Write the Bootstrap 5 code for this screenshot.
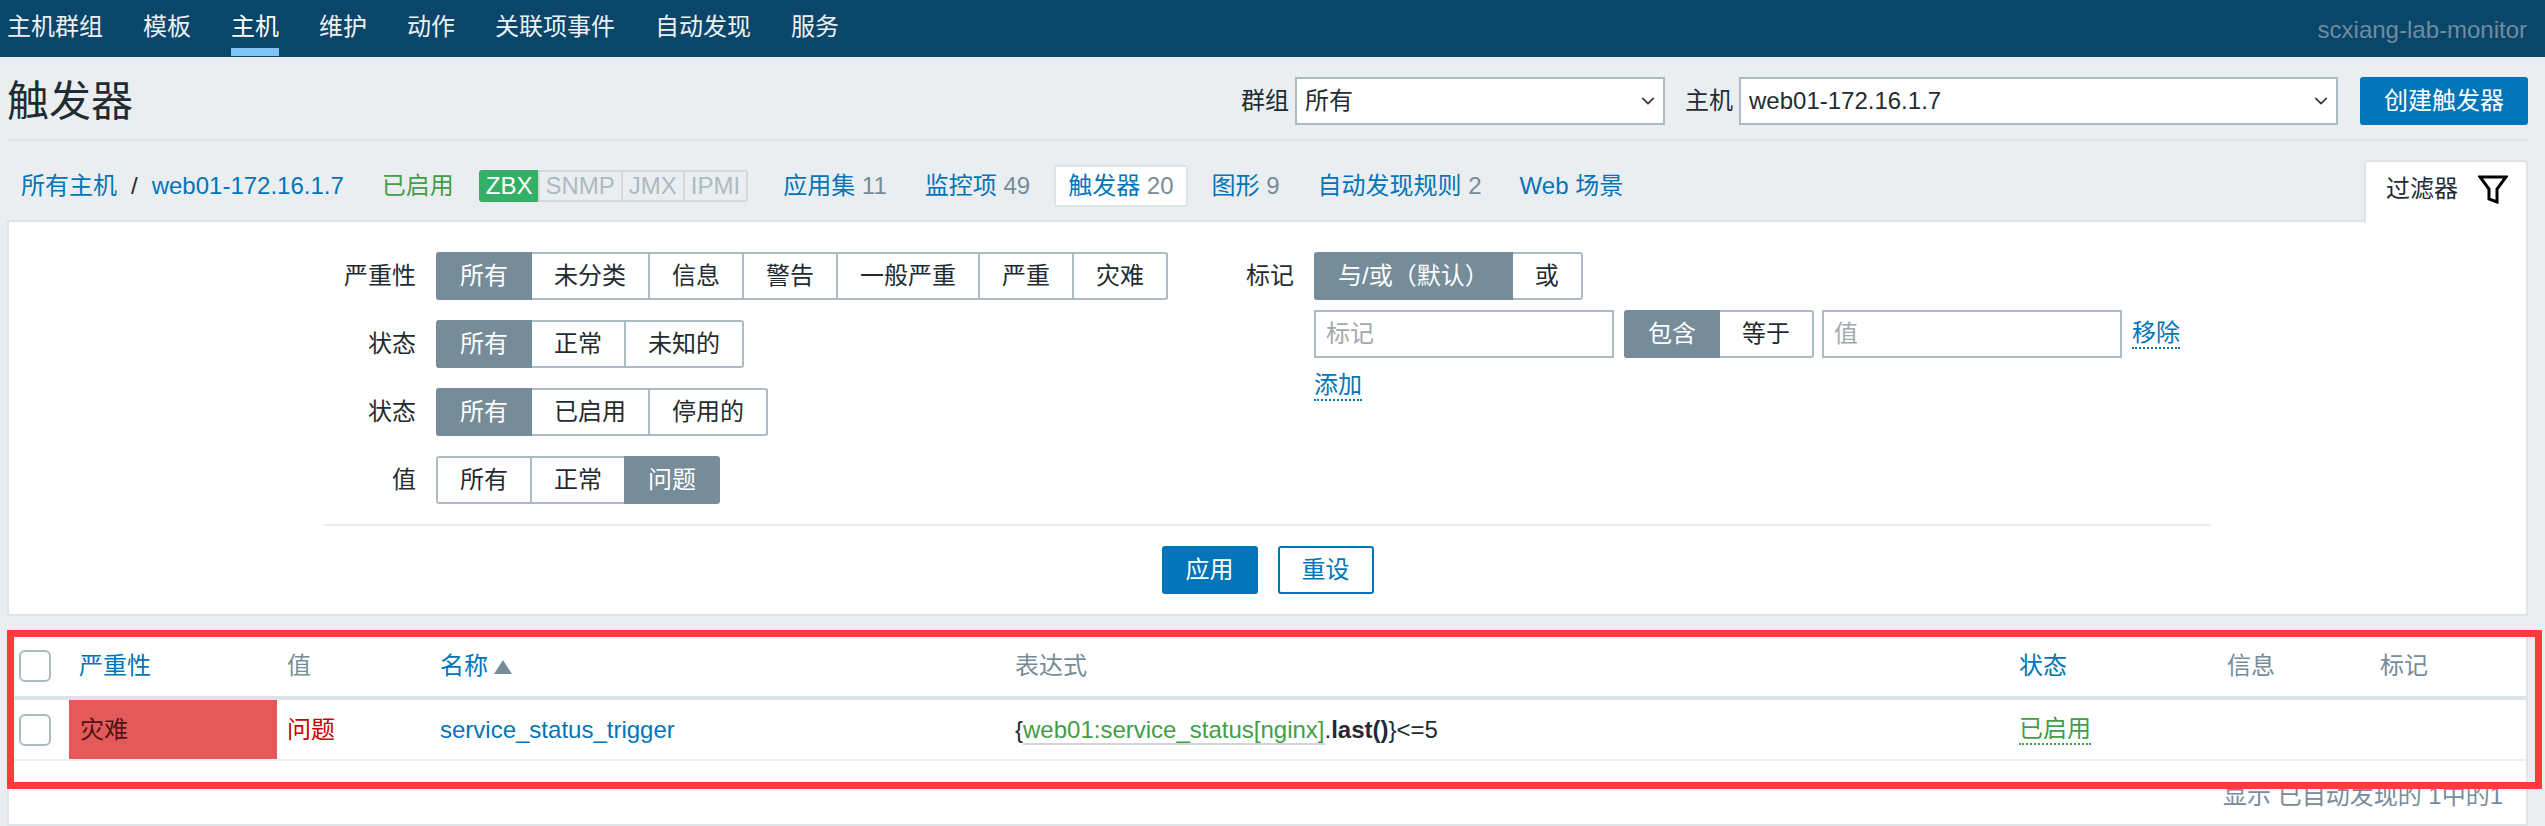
<!DOCTYPE html>
<html lang="zh-CN">
<head>
<meta charset="utf-8">
<title>触发器</title>
<link rel="stylesheet" href="https://cdn.jsdelivr.net/npm/bootstrap@5.3.0/dist/css/bootstrap.min.css">
<style>
html,body{height:826px;overflow:hidden}
body{background:#ebeef0;color:#1f2c33;font:24px/28px "Liberation Sans","Noto Sans CJK SC",sans-serif}
a{color:#0275b8;text-decoration:none}
.top-bar{height:57px;background:#0a466a;padding:0 18px 0 7px}
.top-menu{gap:40px}
.top-menu a{display:block;color:#eef1f3;padding-top:13px;height:56px;border-bottom:8px solid transparent;line-height:28px}
.top-menu a.current{color:#fff;border-bottom-color:#82c5f5}
.top-host{color:#6f8c9e;padding-top:16px}
.head-row{margin:0 17px 0 7px;padding:20px 0 14px;height:84px;border-bottom:2px solid #dfe4e7}
.head-title{font-size:42px;line-height:48px;font-weight:400;margin:0;padding-top:2px;color:#1f2c33}
.head-label{margin-right:6px}
.pick{height:48px;border:2px solid #acbbc2;border-radius:0;font-size:24px;line-height:28px;color:#1f2c33;padding:0 40px 0 8px;background-size:18px 14px;background-position:right 6px center}
.pick-a{width:370px;margin-right:20px}
.pick-b{width:599px;margin-right:22px}
.main-btn{--bs-btn-bg:#0275b8;--bs-btn-border-color:#0275b8;--bs-btn-color:#fff;--bs-btn-hover-bg:#0275b8;--bs-btn-hover-border-color:#0275b8;--bs-btn-hover-color:#fff;--bs-btn-font-size:24px;--bs-btn-line-height:44px;--bs-btn-padding-y:0;--bs-btn-padding-x:22px;--bs-btn-border-width:2px;--bs-btn-border-radius:3px}
.ghost-btn{--bs-btn-bg:#fff;--bs-btn-color:#0275b8;--bs-btn-hover-bg:#fff;--bs-btn-hover-color:#0275b8}
.sub-row{margin:0 17px 0 7px;height:79px;padding-top:10px}
.crumb{margin-left:14px;color:#1f2c33;white-space:nowrap}
.crumb a+span{margin:0 14px}
.on-green{color:#429e47}
.sub-state{margin:0 25px 0 38px}
.proto{height:32px;margin-right:21px;line-height:28px}
.proto span{display:block;padding:0 6px;height:32px;background:#ebeef0;color:#acbbc2;border:2px solid #d3dade;margin-left:-2px}
.proto span:first-child{margin-left:0;border-radius:3px 0 0 3px;background:#34af67;border-color:#34af67;color:#fff;padding:0 5px}
.proto span:last-child{border-radius:0 3px 3px 0}
.sub-tabs{gap:10px}
.sub-tab{padding:5px 12px;border:2px solid transparent;border-radius:3px;color:#768d99;white-space:nowrap}
.sub-tab.here{background:#fff;border-color:#dfe4e7}
.flt-tab{align-self:flex-end;width:164px;height:63px;margin-bottom:-3px;background:#fff;border:2px solid #dfe4e7;border-bottom:0;border-radius:3px 3px 0 0;padding:13px 0 0 20px;position:relative;z-index:1;color:#1f2c33}
.flt-tab svg{margin-left:20px;margin-top:-4px}
.flt-panel{margin:0 17px 0 7px;background:#fff;border:2px solid #dfe4e7;padding:30px 0 20px}
.flt-left{width:1130px;flex:none}
.flt-label{text-align:right;flex:none;padding-right:20px;line-height:48px}
.lab-left{width:427px}
.lab-right{width:175px}
.flt-line{margin-bottom:20px}
.flt-line:last-child{margin-bottom:0}
.seg{white-space:nowrap;flex:none;--bs-btn-padding-x:22px;--bs-btn-padding-y:0;--bs-btn-font-size:24px;--bs-btn-line-height:44px;--bs-btn-border-width:2px;--bs-btn-border-color:#acbbc2;--bs-btn-color:#1f2c33;--bs-btn-bg:#fff;--bs-btn-border-radius:3px;--bs-btn-active-bg:#768d99;--bs-btn-active-border-color:#768d99;--bs-btn-active-color:#fff;--bs-btn-hover-bg:#fff;--bs-btn-hover-color:#1f2c33;--bs-btn-hover-border-color:#acbbc2}
.btn-group>.seg.seg.seg:not(:first-child){margin-left:-2px}
.btn-group>.seg.active{z-index:1}
.tag-row{margin-top:10px;gap:10px}
.tag-row .btn-group{margin-right:-2px}
.tag-input{width:300px;height:48px;flex:none;border:2px solid #acbbc2;border-radius:0;font-size:24px;padding:0 10px}
.tag-input::placeholder{color:#a3a9ad}
.dot-link{border-bottom:2px dotted #0275b8;display:inline-block;line-height:28px}
.add-link{margin-top:13px}
.flt-rule{height:2px;background:#ebeef0;margin:20px 315px}
.flt-actions{gap:20px}
.trig-wrap{margin:20px 17px 0 7px;position:relative}
.trig-panel{background:#fff;border:2px solid #dfe4e7;border-top:0;height:190px}
.trig-tbl{margin:0;table-layout:fixed;width:2517px;--bs-table-bg:#fff;--bs-table-color:#1f2c33}
.trig-tbl th,.trig-tbl td{padding:0 10px;vertical-align:middle;font-weight:400;box-shadow:none}
.trig-tbl thead th{height:62px;color:#768d99;border-bottom:4px solid #dde2e6}
.trig-tbl tbody td{height:62px;border-bottom:2px solid #ebeef0}
.trig-tbl td.sev-cell{background:#e45959;--bs-table-bg:#e45959;color:#4f1414;padding-left:11px}
.tick{width:32px;height:32px;margin:0;border:2px solid #acbbc2;border-radius:4px;display:block}
.val-bad{color:#cc0000}
.sort-mark{display:inline-block;width:0;height:0;border:9px solid transparent;border-top:0;border-bottom:14px solid #768d99;margin-left:6px;vertical-align:0}
.exp-item{color:#429e47;border-bottom:2px solid #cfd5d9}
.exp-fn{font-weight:700}
.stat-link{color:#429e47;border-bottom-color:#429e47}
.trig-foot{padding:21px 23px 0 0;text-align:right;color:#768d99}
.red-frame{position:absolute;left:0;right:-14px;top:-6px;height:159px;border:7px solid #ff3a3a;pointer-events:none;z-index:2}
</style>
</head>
<body>
<nav class="top-bar d-flex justify-content-between">
  <div class="top-menu d-flex">
    <a href="#">主机群组</a><a href="#">模板</a><a href="#" class="current">主机</a><a href="#">维护</a><a href="#">动作</a><a href="#">关联项事件</a><a href="#">自动发现</a><a href="#">服务</a>
  </div>
  <div class="top-host">scxiang-lab-monitor</div>
</nav>

<header class="head-row d-flex align-items-center justify-content-between">
  <h1 class="head-title">触发器</h1>
  <form class="d-flex align-items-center">
    <label class="head-label">群组</label>
    <select class="form-select pick pick-a"><option>所有</option></select>
    <label class="head-label">主机</label>
    <select class="form-select pick pick-b"><option>web01-172.16.1.7</option></select>
    <button type="button" class="btn main-btn">创建触发器</button>
  </form>
</header>

<div class="sub-row d-flex align-items-center justify-content-between">
  <div class="d-flex align-items-center">
    <div class="crumb"><a href="#">所有主机</a><span>/</span><a href="#">web01-172.16.1.7</a></div>
    <a href="#" class="on-green sub-state">已启用</a>
    <div class="proto d-flex"><span>ZBX</span><span>SNMP</span><span>JMX</span><span>IPMI</span></div>
    <div class="sub-tabs d-flex align-items-center">
      <div class="sub-tab"><a href="#">应用集</a> 11</div>
      <div class="sub-tab"><a href="#">监控项</a> 49</div>
      <div class="sub-tab here"><a href="#">触发器</a> 20</div>
      <div class="sub-tab"><a href="#">图形</a> 9</div>
      <div class="sub-tab"><a href="#">自动发现规则</a> 2</div>
      <div class="sub-tab"><a href="#">Web 场景</a></div>
    </div>
  </div>
  <div class="flt-tab">过滤器<svg width="30" height="30" viewBox="0 0 30 30" fill="none" stroke="#000" stroke-width="3"><path d="M2 3H28L19 15V28L11 25V15Z"/></svg></div>
</div>

<section class="flt-panel">
  <div class="d-flex">
    <div class="flt-left">
      <div class="flt-line d-flex">
        <div class="flt-label lab-left">严重性</div>
        <div class="btn-group"><button class="btn seg active">所有</button><button class="btn seg">未分类</button><button class="btn seg">信息</button><button class="btn seg">警告</button><button class="btn seg">一般严重</button><button class="btn seg">严重</button><button class="btn seg">灾难</button></div>
      </div>
      <div class="flt-line d-flex">
        <div class="flt-label lab-left">状态</div>
        <div class="btn-group"><button class="btn seg active">所有</button><button class="btn seg">正常</button><button class="btn seg">未知的</button></div>
      </div>
      <div class="flt-line d-flex">
        <div class="flt-label lab-left">状态</div>
        <div class="btn-group"><button class="btn seg active">所有</button><button class="btn seg">已启用</button><button class="btn seg">停用的</button></div>
      </div>
      <div class="flt-line d-flex">
        <div class="flt-label lab-left">值</div>
        <div class="btn-group"><button class="btn seg">所有</button><button class="btn seg">正常</button><button class="btn seg active">问题</button></div>
      </div>
    </div>
    <div class="d-flex">
      <div class="flt-label lab-right">标记</div>
      <div>
        <div class="btn-group"><button class="btn seg active">与/或（默认）</button><button class="btn seg">或</button></div>
        <div class="tag-row d-flex align-items-center">
          <input class="form-control tag-input" placeholder="标记">
          <div class="btn-group"><button class="btn seg active">包含</button><button class="btn seg">等于</button></div>
          <input class="form-control tag-input" placeholder="值">
          <a href="#" class="dot-link">移除</a>
        </div>
        <a href="#" class="dot-link add-link">添加</a>
      </div>
    </div>
  </div>
  <div class="flt-rule"></div>
  <div class="flt-actions d-flex justify-content-center">
    <button class="btn main-btn">应用</button>
    <button class="btn main-btn ghost-btn">重设</button>
  </div>
</section>

<section class="trig-wrap">
  <div class="trig-panel">
    <table class="table trig-tbl">
      <colgroup><col style="width:60px"><col style="width:208px"><col style="width:153px"><col style="width:575px"><col style="width:1004px"><col style="width:208px"><col style="width:153px"><col style="width:156px"></colgroup>
      <thead>
        <tr>
          <th><input type="checkbox" class="form-check-input tick"></th>
          <th><a href="#">严重性</a></th>
          <th>值</th>
          <th><a href="#">名称</a><span class="sort-mark"></span></th>
          <th>表达式</th>
          <th><a href="#">状态</a></th>
          <th>信息</th>
          <th>标记</th>
        </tr>
      </thead>
      <tbody>
        <tr>
          <td><input type="checkbox" class="form-check-input tick"></td>
          <td class="sev-cell">灾难</td>
          <td class="val-bad">问题</td>
          <td><a href="#">service_status_trigger</a></td>
          <td>{<span class="exp-item">web01:service_status[nginx]</span>.<span class="exp-fn">last()</span>}&lt;=5</td>
          <td><a href="#" class="dot-link stat-link">已启用</a></td>
          <td></td>
          <td></td>
        </tr>
      </tbody>
    </table>
    <div class="trig-foot">显示 已自动发现的 1中的1</div>
  </div>
  <div class="red-frame"></div>
</section>
</body>
</html>
